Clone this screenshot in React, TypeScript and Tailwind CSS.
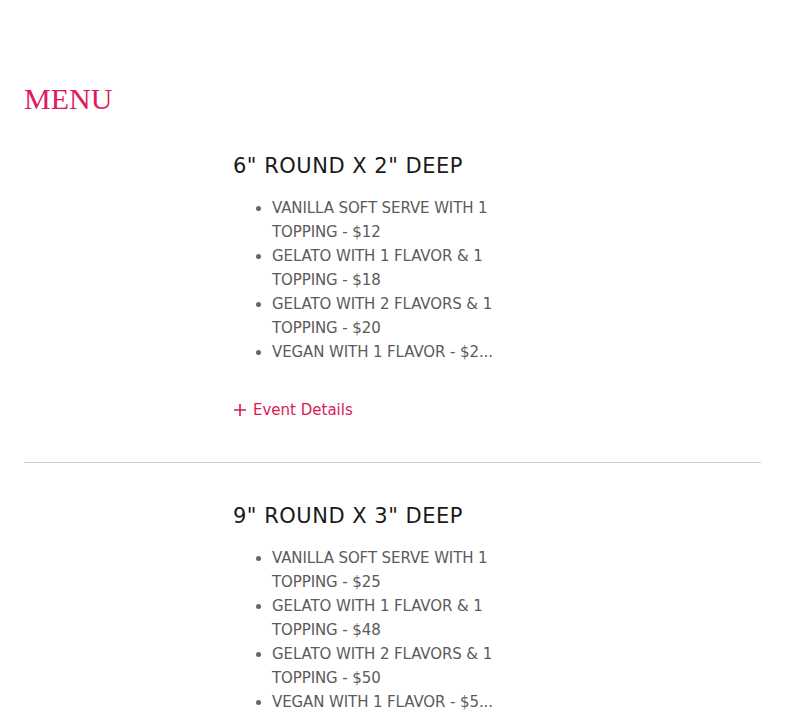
import React from "react";

const sans = "font-['DejaVu_Sans',sans-serif]";

function Section({ title, items }: { title: string; items: string[][] }) {
  return (
    <div className="grid grid-cols-[209px_1fr]">
      <div />
      <div>
        <h3 className={`${sans} text-[21px] leading-[32px] tracking-[0.5px] text-[#1a1a1a] font-normal`}>{title}</h3>
        <ul className={`${sans} mt-[14px] list-disc pl-[39px] text-[15px] leading-[24px] tracking-[-0.1px] text-[#5b5b5b] marker:text-[#666]`}>
          {items.map((lines, i) => (
            <li key={i}>
              {lines.map((l, j) => (
                <React.Fragment key={j}>
                  <span className="whitespace-nowrap">{l}</span>
                  {j < lines.length - 1 && <br />}
                </React.Fragment>
              ))}
            </li>
          ))}
        </ul>
      </div>
    </div>
  );
}

export default function App() {
  return (
    <div className="bg-white min-h-[722px] w-full px-6 pt-[79px] overflow-hidden">
      <h2 className="font-['Liberation_Serif',serif] text-[30px] leading-[40px] text-[#e0195a]">MENU</h2>
      <div className="mt-[31px]">
        <Section
          title={'6" ROUND X 2" DEEP'}
          items={[
            ["VANILLA SOFT SERVE WITH 1", "TOPPING - $12"],
            ["GELATO WITH 1 FLAVOR & 1", "TOPPING - $18"],
            ["GELATO WITH 2 FLAVORS & 1", "TOPPING - $20"],
            ["VEGAN WITH 1 FLAVOR - $2..."],
          ]}
        />
        <div className="grid grid-cols-[209px_1fr] mt-[34px]">
          <div />
          <button className={`${sans} flex items-center gap-[6px] text-[15px] leading-[24px] text-[#d81b55]`}>
            <svg width="14" height="14" viewBox="0 0 14 14" fill="none" stroke="currentColor" strokeWidth="1.6">
              <path d="M7 1v12M1 7h12" />
            </svg>
            Event Details
          </button>
        </div>
      </div>
      <div className="mt-[40px] h-px bg-[#cccccc]" />
      <div className="mt-[37px]">
        <Section
          title={'9" ROUND X 3" DEEP'}
          items={[
            ["VANILLA SOFT SERVE WITH 1", "TOPPING - $25"],
            ["GELATO WITH 1 FLAVOR & 1", "TOPPING - $48"],
            ["GELATO WITH 2 FLAVORS & 1", "TOPPING - $50"],
            ["VEGAN WITH 1 FLAVOR - $5..."],
          ]}
        />
      </div>
    </div>
  );
}
